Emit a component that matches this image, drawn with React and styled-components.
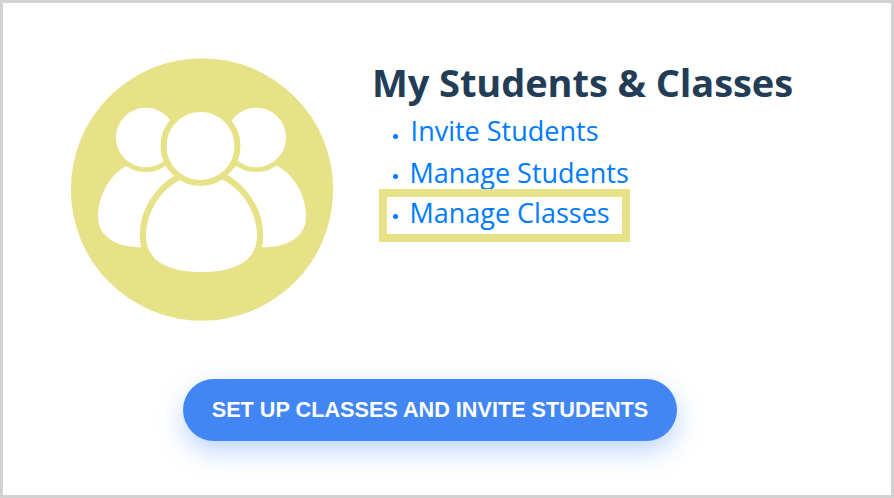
import React from 'react'
import styled, { createGlobalStyle } from 'styled-components'

const GlobalStyle = createGlobalStyle`
  * {
    box-sizing: border-box;
  }
  body {
    margin: 0;
    background: #ffffff;
  }
`;

const Card = styled.main`
  display: flex;
  flex-direction: column;
  width: 894px;
  height: 498px;
  border: 3px solid #d2d2d2;
  background: #ffffff;
  font-family: 'Open Sans', sans-serif;
  overflow: hidden;
`;

const Summary = styled.section`
  display: flex;
  align-items: flex-start;
  height: 376px;
  padding: 54px 0 0 67px;
`;

const GroupIcon = styled.svg`
  flex: none;
  width: 264px;
  height: 265px;
`;

const Details = styled.div`
  margin-left: 36px;
`;

const Title = styled.h2`
  margin: -2px 0 1px 2px;
  color: #233d57;
  font-size: 38px;
  font-weight: 700;
  line-height: 54px;
  letter-spacing: -0.08px;
  white-space: nowrap;
`;

const LinkList = styled.ul`
  margin: 0;
  padding: 0 0 0 23px;
  list-style: none;
`;

const LinkItem = styled.li`
  position: relative;
  display: flex;
  align-items: center;
  width: max-content;
  height: 40px;

  &:first-child {
    height: 42px;
    margin-bottom: 1px;
  }
`;

const Dot = styled.span`
  width: 5px;
  height: 5px;
  margin: ${props => props.$drop || 7}px ${props => props.$gap || 11.4}px 0 0;
  border-radius: 50%;
  background: #007bff;
`;

const Link = styled.a`
  color: #007bff;
  font-size: 27px;
  line-height: 40px;
  text-decoration: none;
  white-space: nowrap;
`;

const Highlight = styled.span`
  position: absolute;
  top: -4px;
  left: -14px;
  width: 251px;
  height: 53px;
  border: 8px solid #e7e288;
`;

const Actions = styled.div`
  padding-left: 180px;
`;

const Button = styled.button`
  width: 494px;
  height: 62px;
  padding: 0;
  border: none;
  border-radius: 31px;
  background: #4286f4;
  box-shadow: 0 10px 26px rgba(66, 134, 244, 0.35);
  color: white;
  font-family: 'Liberation Sans', Arial, sans-serif;
  font-size: 21.65px;
  font-weight: 700;
  white-space: nowrap;
`;

const StudentsIcon = () => (
  <GroupIcon viewBox="70 57 264 265" aria-hidden="true">
    <circle cx="202" cy="189.5" r="131.2" fill="#e7e288" />
    <g fill="white">
      <path d="M146 161 C116 161 98 192 98 216 C98 238 118 247.3 141 247.3 L200 247.3 L200 200 C184 174 166 161 146 161 Z" />
      <path d="M257 161 C288 161 306 192 306 216 C306 238 286 247.3 263.3 247.3 L204 247.3 L204 200 C220 174 237 161 257 161 Z" />
    </g>
    <g fill="white" stroke="#e7e288" strokeWidth="4.8">
      <circle cx="145.8" cy="137.5" r="32.2" />
      <circle cx="256.2" cy="137.5" r="32.2" />
    </g>
    <path
      d="M201.5 175 C170 175 146 206 146 236 C146 262 170 272 201.5 272 C233 272 257 262 257 236 C257 206 233 175 201.5 175 Z"
      fill="white"
      stroke="#e7e288"
      strokeWidth="12.5"
      paintOrder="stroke"
    />
    <circle cx="200.5" cy="146" r="37" fill="white" stroke="#e7e288" strokeWidth="6" />
  </GroupIcon>
)

const App = () => {
  return (
    <>
      <GlobalStyle />
      <Card>
        <Summary>
          <StudentsIcon />
          <Details>
            <Title>My Students &amp; Classes</Title>
            <LinkList>
              <LinkItem>
                <Dot $gap={12.6} $drop={10} />
                <Link>Invite Students</Link>
              </LinkItem>
              <LinkItem>
                <Dot />
                <Link>Manage Students</Link>
              </LinkItem>
              <LinkItem>
                <Dot />
                <Link>Manage Classes</Link>
                <Highlight />
              </LinkItem>
            </LinkList>
          </Details>
        </Summary>
        <Actions>
          <Button>SET UP CLASSES AND INVITE STUDENTS</Button>
        </Actions>
      </Card>
    </>
  )
}

export default App
